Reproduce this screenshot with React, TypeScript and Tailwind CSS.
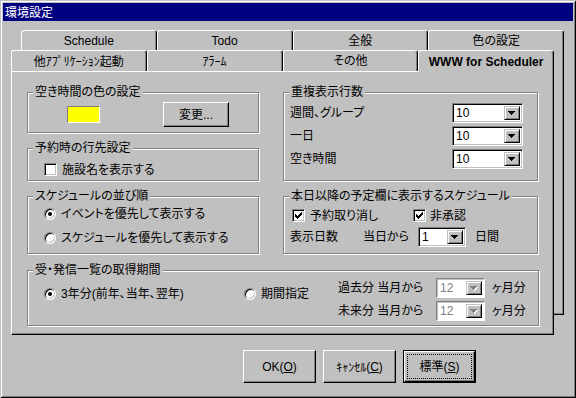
import React from "react";

// Win95-style settings dialog (環境設定)

function Check({ checked }: { checked?: boolean }) {
  return (
    <div className="w-[13px] h-[13px] shrink-0 bg-white border border-t-[#808080] border-l-[#808080] border-r-white border-b-white shadow-[inset_1px_1px_0_#000,inset_-1px_-1px_0_#c0c0c0]">
      {checked && (
        <svg className="block" width="11" height="11" viewBox="0 0 11 11" shapeRendering="crispEdges">
          {[[2, 4], [3, 5], [4, 6], [5, 5], [6, 4], [7, 3], [8, 2]].map(([x, y]) => (
            <rect key={x} x={x} y={y} width="1" height="3" fill="#000" />
          ))}
        </svg>
      )}
    </div>
  );
}

function Radio({ checked }: { checked?: boolean }) {
  return (
    <div className="w-[12px] h-[12px] shrink-0 rounded-full bg-white border border-t-[#808080] border-l-[#808080] border-r-white border-b-white shadow-[inset_1px_1px_0_#000,inset_-1px_-1px_0_#c0c0c0] flex items-center justify-center">
      {checked && <div className="w-[4px] h-[4px] rounded-full bg-black" />}
    </div>
  );
}

function Arrow({ disabled }: { disabled?: boolean }) {
  const rows = [[0, 7], [1, 5], [2, 3], [3, 1]];
  return (
    <svg className="block" width="8" height="5" viewBox="0 0 8 5" shapeRendering="crispEdges">
      {disabled &&
        rows.map(([y, w]) => (
          <rect key={"s" + y} x={y + 1} y={y + 1} width={w} height="1" fill="#fff" />
        ))}
      {rows.map(([y, w]) => (
        <rect key={y} x={y} y={y} width={w} height="1" fill={disabled ? "#808080" : "#000"} />
      ))}
    </svg>
  );
}

function Combo({ value, className, disabled }: { value: string; className: string; disabled?: boolean }) {
  return (
    <div
      className={`${className} h-[20px] shrink-0 flex bg-white p-[2px] border border-t-[#808080] border-l-[#808080] border-r-white border-b-white ${
        disabled ? "shadow-[inset_1px_1px_0_#c0c0c0] text-[#808080]" : "shadow-[inset_1px_1px_0_#000,inset_-1px_-1px_0_#c0c0c0]"
      }`}
    >
      <span className="flex-1 pl-[1px] leading-[15px] font-['Liberation_Sans',sans-serif]">{value}</span>
      <div className="w-[16px] h-full bg-[#c0c0c0] border border-t-[#c0c0c0] border-l-[#c0c0c0] border-r-black border-b-black shadow-[inset_1px_1px_0_#fff,inset_-1px_-1px_0_#808080] flex items-center justify-center">
        <Arrow disabled={disabled} />
      </div>
    </div>
  );
}

function Btn({ children, className, def }: { children: React.ReactNode; className: string; def?: boolean }) {
  const raised =
    "border border-t-white border-l-white border-r-black border-b-black shadow-[inset_-1px_-1px_0_#808080]";
  if (def) {
    return (
      <div className={`${className} border border-black`}>
        <div className={`w-full h-full p-[2px] ${raised}`}>
          <div className="w-full h-full border border-dotted border-black flex items-center justify-center">
            {children}
          </div>
        </div>
      </div>
    );
  }
  return <div className={`${className} ${raised} flex items-center justify-center`}>{children}</div>;
}

function Group({ label, className, children }: { label: string; className: string; children?: React.ReactNode }) {
  return (
    <div className={`relative border border-[#808080] shadow-[inset_1px_1px_0_#fff,1px_1px_0_#fff] ${className}`}>
      <span className="absolute left-[5px] top-[-8px] px-[2px] bg-[#c0c0c0] leading-[14px] whitespace-nowrap">
        {label}
      </span>
      {children}
    </div>
  );
}

function Tab({ children, selected, className = "" }: { children: React.ReactNode; selected?: boolean; className?: string }) {
  return (
    <div
      className={`flex-1 flex items-center justify-center bg-[#c0c0c0] border-t border-l border-r border-t-white border-l-white border-r-black rounded-tl-[3px] rounded-tr-[3px] shadow-[inset_-1px_0_0_#808080] whitespace-nowrap ${
        selected ? "h-[22px] -mb-[1px] relative z-10 font-bold" : "h-full"
      } ${className}`}
    >
      {children}
    </div>
  );
}

// half-width katakana keep their full 6px advance
const HW = "[font-feature-settings:normal] font-['Noto_Sans_CJK_JP',sans-serif]";

export default function App() {
  return (
    <div className="w-[576px] h-[398px] overflow-hidden bg-[#c0c0c0] p-[3px] flex flex-col text-[12px] leading-[14px] text-black font-['Liberation_Sans','Noto_Sans_CJK_JP',sans-serif] [font-feature-settings:'palt'] shadow-[inset_1px_1px_0_#c0c0c0,inset_-1px_-1px_0_#000,inset_2px_2px_0_#fff,inset_-2px_-2px_0_#808080]">
      <div className="h-[18px] shrink-0 bg-[#000080] text-white pl-[2px] flex items-center font-['Noto_Sans_CJK_JP',sans-serif]">
        環境設定
      </div>

      {/* tab control: back row card and front row card stacked in one grid cell */}
      <div className="mt-[9px] ml-[8px] w-[553px] grid">
        <div className="[grid-area:1/1] ml-[10px] w-[543px] flex flex-col">
          <div className="flex h-[20px]">
            <Tab>Schedule</Tab>
            <Tab>Todo</Tab>
            <Tab>全般</Tab>
            <Tab>色の設定</Tab>
          </div>
          <div className="h-[265px] border-r border-b border-r-black border-b-black shadow-[inset_-1px_-1px_0_#808080]" />
        </div>

        <div className="[grid-area:1/1] mt-[20px] w-[543px] flex flex-col">
          <div className="flex h-[21px] items-end">
            <Tab>
              <span className={HW}>他ｱﾌﾟﾘｹｰｼｮﾝ起動</span>
            </Tab>
            <Tab>
              <span className={HW}>ｱﾗｰﾑ</span>
            </Tab>
            <Tab>その他</Tab>
            <Tab selected>WWW for Scheduler</Tab>
          </div>
          <div className="h-[264px] bg-[#c0c0c0] border border-t-white border-l-white border-r-black border-b-black shadow-[inset_-1px_-1px_0_#808080] pl-[15px] pt-[20px]">
            <div className="flex gap-[24px]">
              <div className="w-[232px] flex flex-col gap-[15px]">
                <Group label="空き時間の色の設定" className="h-[41px] flex items-start pl-[39px]">
                  <div className="mt-[13px] w-[33px] h-[17px] bg-[#ffff00] border border-t-[#808080] border-l-[#808080] border-r-white border-b-white" />
                  <Btn className="ml-[63px] mt-[9px] w-[66px] h-[25px]">変更...</Btn>
                </Group>
                <Group label="予約時の行先設定" className="h-[33px] pl-[16px] pt-[14px]">
                  <div className="flex items-center gap-[5px] h-[13px]">
                    <Check />
                    <span>施設名を表示する</span>
                  </div>
                </Group>
              </div>
              <Group label="重複表示行数" className="w-[255px] h-[89px] pt-[10px] flex flex-col gap-[3px]">
                {["週間、グループ", "一日", "空き時間"].map((l) => (
                  <div key={l} className="flex items-center h-[20px]">
                    <span className="w-[168px] pl-[6px]">{l}</span>
                    <Combo value="10" className="w-[71px]" />
                  </div>
                ))}
              </Group>
            </div>

            <div className="flex gap-[24px] mt-[15px]">
              <Group label="スケジュールの並び順" className="w-[232px] h-[58px] pl-[16px] pt-[11px] flex flex-col gap-[12px]">
                <div className="flex items-center gap-[5px] h-[12px]">
                  <Radio checked />
                  <span>イベントを優先して表示する</span>
                </div>
                <div className="flex items-center gap-[5px] h-[12px]">
                  <Radio />
                  <span>スケジュールを優先して表示する</span>
                </div>
              </Group>
              <Group label="本日以降の予定欄に表示するスケジュール" className="w-[255px] h-[58px] pt-[12px]">
                <div className="flex items-center h-[13px] pl-[8px]">
                  <div className="w-[121px] flex items-center gap-[5px]">
                    <Check checked />
                    <span>予約取り消し</span>
                  </div>
                  <div className="flex items-center gap-[4px]">
                    <Check checked />
                    <span>非承認</span>
                  </div>
                </div>
                <div className="flex items-center h-[20px] mt-[5px] pl-[6px]">
                  <span className="w-[73px]">表示日数</span>
                  <span className="w-[55px]">当日から</span>
                  <Combo value="1" className="w-[48px]" />
                  <span className="ml-[9px]">日間</span>
                </div>
              </Group>
            </div>

            <Group label="受・発信一覧の取得期間" className="mt-[16px] w-[512px] h-[56px] flex">
              <div className="w-[216px] pl-[16px] pt-[17px]">
                <div className="flex items-center gap-[5px] h-[12px]">
                  <Radio checked />
                  <span>3年分(前年、当年、翌年)</span>
                </div>
              </div>
              <div className="w-[94px] pt-[17px]">
                <div className="flex items-center gap-[5px] h-[12px]">
                  <Radio />
                  <span>期間指定</span>
                </div>
              </div>
              <div className="pt-[7px] flex flex-col gap-[3px]">
                {["過去分 当月から", "未来分 当月から"].map((l) => (
                  <div key={l} className="flex items-center h-[20px]">
                    <span className="w-[98px] whitespace-pre">{l}</span>
                    <Combo value="12" className="w-[49px]" disabled />
                    <span className="ml-[7px]">ヶ月分</span>
                  </div>
                ))}
              </div>
            </Group>
          </div>
        </div>
      </div>

      <div className="mt-[15px] ml-[240px] flex gap-[7px]">
        <Btn className="w-[73px] h-[33px]">
          OK(<span className="underline">O</span>)
        </Btn>
        <Btn className="w-[73px] h-[33px]">
          <span className={HW}>ｷｬﾝｾﾙ</span>(<span className="underline">C</span>)
        </Btn>
        <Btn def className="w-[73px] h-[33px]">
          標準(<span className="underline">S</span>)
        </Btn>
      </div>
    </div>
  );
}
